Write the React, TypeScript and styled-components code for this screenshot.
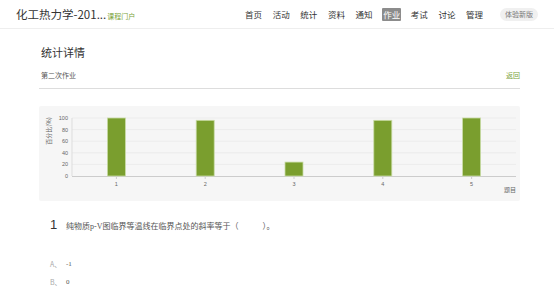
import styled, { createGlobalStyle } from 'styled-components';

const GlobalStyle = createGlobalStyle`
  html, body {
    margin: 0;
    padding: 0;
    background: #ffffff;
    font-family: "Noto Sans CJK SC", "Noto Sans", sans-serif;
    color: #333;
  }
`;

const Header = styled.header`
  height: 28px;
  display: flex;
  align-items: center;
  padding: 0 16px 0 16px;
  border-bottom: 1px solid #eeeeee;
`;

const CourseTitle = styled.div`
  display: flex;
  align-items: baseline;
  font-size: 11.5px;
  color: #333;
  white-space: nowrap;
`;

const PortalLink = styled.span`
  font-size: 7px;
  color: #7aa33a;
  margin-left: 1px;
`;

const Nav = styled.nav`
  margin-left: auto;
  display: flex;
  align-items: center;
  gap: 8.6px;
`;

const NavItem = styled.span<{ $active?: boolean }>`
  font-size: 8.5px;
  line-height: 13px;
  padding: 0 1px;
  border-radius: 1px;
  color: ${p => (p.$active ? '#ffffff' : '#333333')};
  background: ${p => (p.$active ? '#8c8c8c' : 'transparent')};
`;

const TryButton = styled.span`
  margin-left: 16px;
  font-size: 7px;
  line-height: 13px;
  padding: 0 5px;
  border-radius: 7px;
  background: #f0f0f0;
  color: #777;
`;

const Main = styled.main`
  padding: 0 34px 0 39px;
`;

const PageTitle = styled.h1`
  margin: 0;
  padding: 16px 0 0 2px;
  font-size: 11px;
  line-height: 14px;
  font-weight: 400;
  color: #333;
`;

const SubHeader = styled.div`
  display: flex;
  justify-content: space-between;
  align-items: center;
  margin-top: 11px;
  padding: 0 0 8px 2px;
  border-bottom: 1px solid #dddddd;
  font-size: 7px;
  line-height: 10px;
`;

const HomeworkName = styled.span`
  color: #555;
`;

const BackLink = styled.span`
  color: #7aa33a;
`;

const ChartPanel = styled.div`
  margin-top: 17px;
  height: 95px;
  background: #f6f6f6;
  border-radius: 2px;

  svg {
    display: block;
  }
`;

const Question = styled.div`
  display: flex;
  align-items: baseline;
  gap: 10px;
  padding: 16px 0 0 11px;
`;

const QuestionNo = styled.span`
  font-family: "Liberation Sans", sans-serif;
  font-size: 13px;
  color: #333;
  width: 6px;
`;

const QuestionText = styled.span`
  font-family: "Liberation Serif", "Noto Sans CJK SC", serif;
  font-size: 8px;
  color: #555;
`;

const Options = styled.div`
  display: flex;
  flex-direction: column;
  gap: 5.5px;
  padding: 26px 0 0 11px;
`;

const Option = styled.div`
  display: flex;
  align-items: center;
  height: 12px;
  font-size: 7px;
`;

const OptionLabel = styled.span`
  width: 16px;
  color: #aaaaaa;
`;

const OptionValue = styled.span`
  font-family: "Liberation Serif", "Noto Sans CJK SC", serif;
  color: #555;
`;

const navItems = ['首页', '活动', '统计', '资料', '通知', '作业', '考试', '讨论', '管理'];
const scores = [100, 96, 24, 96, 100];

const X0 = 33;
const X1 = 477;
const Y100 = 12;
const Y0 = 70;

const BarChart = () => {
  const band = (X1 - X0) / scores.length;
  const yOf = (v: number) => Y0 - ((Y0 - Y100) * v) / 100;
  return (
    <svg width="481" height="95" viewBox="0 0 481 95">
      {[0, 20, 40, 60, 80, 100].map(t => (
        <g key={t}>
          {t > 0 && <line x1={X0} x2={X1} y1={yOf(t)} y2={yOf(t)} stroke="#ececec" strokeWidth="1" />}
          <text x={X0 - 4} y={yOf(t) + 2} fontSize="5.5" fill="#666" textAnchor="end" fontFamily="Liberation Sans, sans-serif">
            {t}
          </text>
        </g>
      ))}
      <line x1={X0} x2={X0} y1={Y100} y2={Y0} stroke="#dddddd" strokeWidth="1" />
      <line x1={X0} x2={X1} y1={Y0 + 0.5} y2={Y0 + 0.5} stroke="#cccccc" strokeWidth="1" />
      <text
        transform="translate(12 25) rotate(-90)"
        fontSize="6"
        fill="#666"
        textAnchor="middle"
        fontFamily="Noto Sans CJK SC, sans-serif"
      >
        百分比(%)
      </text>
      {scores.map((s, i) => {
        const cx = X0 + band * (i + 0.5);
        return (
          <g key={i}>
            <rect x={cx - 9} y={yOf(s)} width="18" height={Y0 - yOf(s)} fill="#7a9e2e" stroke="#c9dba6" strokeWidth="0.8" />
            <line x1={cx} x2={cx} y1={Y0} y2={Y0 + 3} stroke="#cccccc" strokeWidth="1" />
            <text x={cx} y={80} fontSize="5.5" fill="#666" textAnchor="middle" fontFamily="Liberation Sans, sans-serif">
              {i + 1}
            </text>
          </g>
        );
      })}
      <text x={X1} y={86} fontSize="6" fill="#666" textAnchor="end" fontFamily="Noto Sans CJK SC, sans-serif">
        题目
      </text>
    </svg>
  );
};

const App = () => {
  return (
    <>
      <GlobalStyle />
      <Header>
        <CourseTitle>
          化工热力学-201...<PortalLink>课程门户</PortalLink>
        </CourseTitle>
        <Nav>
          {navItems.map(item => (
            <NavItem key={item} $active={item === '作业'}>
              {item}
            </NavItem>
          ))}
        </Nav>
        <TryButton>体验新版</TryButton>
      </Header>
      <Main>
        <PageTitle>统计详情</PageTitle>
        <SubHeader>
          <HomeworkName>第二次作业</HomeworkName>
          <BackLink>返回</BackLink>
        </SubHeader>
        <ChartPanel>
          <BarChart />
        </ChartPanel>
        <Question>
          <QuestionNo>1</QuestionNo>
          <QuestionText>纯物质p-V图临界等温线在临界点处的斜率等于（　　　）。</QuestionText>
        </Question>
        <Options>
          <Option>
            <OptionLabel>A、</OptionLabel>
            <OptionValue>-1</OptionValue>
          </Option>
          <Option>
            <OptionLabel>B、</OptionLabel>
            <OptionValue>0</OptionValue>
          </Option>
        </Options>
      </Main>
    </>
  );
};

export default App;
